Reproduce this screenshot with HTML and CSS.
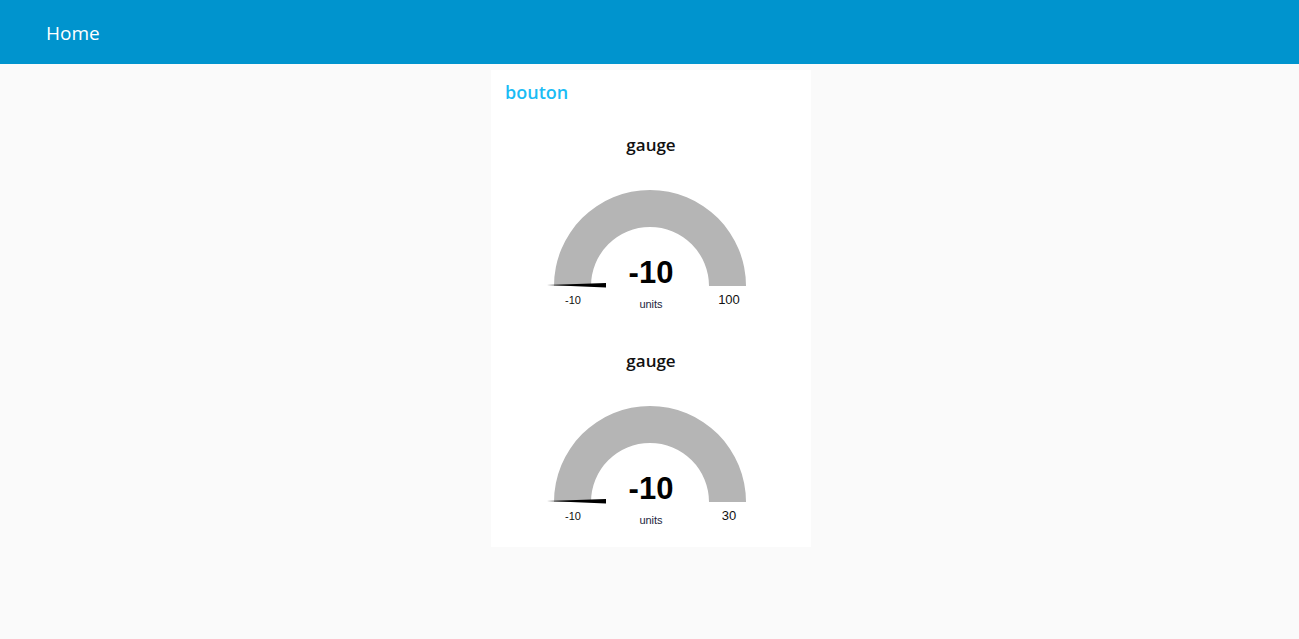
FILE: index.html
```html
<!DOCTYPE html>
<html>
<head>
<meta charset="utf-8">
<title>Node-RED Dashboard</title>
<link rel="stylesheet" href="styles.css">
</head>
<body>
<header class="toolbar">
  <span class="toolbar-title">Home</span>
</header>
<main class="content">
  <section class="card">
    <h2 class="card-title">bouton</h2>
    <div class="gauge-block">
      <div class="gauge-title">gauge</div>
      <svg class="gauge-svg" width="320" height="166" viewBox="0 0 320 166">
        <path class="gauge-arc" d="M 63 121 A 96 96 0 0 1 255 121 L 218 121 A 59 59 0 0 0 100 121 Z"/>
        <polygon class="gauge-needle" points="56,120 115,118 115,122.5"/>
        <text class="gauge-value" x="160" y="118">-10</text>
        <text class="gauge-units" x="160" y="143">units</text>
        <text class="gauge-label" x="82" y="139">-10</text>
        <text class="gauge-label gauge-max" x="238" y="139">100</text>
      </svg>
    </div>
    <div class="gauge-block">
      <div class="gauge-title">gauge</div>
      <svg class="gauge-svg" width="320" height="166" viewBox="0 0 320 166">
        <path class="gauge-arc" d="M 63 121 A 96 96 0 0 1 255 121 L 218 121 A 59 59 0 0 0 100 121 Z"/>
        <polygon class="gauge-needle" points="56,120 115,118 115,122.5"/>
        <text class="gauge-value" x="160" y="118">-10</text>
        <text class="gauge-units" x="160" y="143">units</text>
        <text class="gauge-label" x="82" y="139">-10</text>
        <text class="gauge-label gauge-max" x="238" y="139">30</text>
      </svg>
    </div>
  </section>
</main>
</body>
</html>
```
FILE: styles.css
```css
html, body {
  margin: 0;
  padding: 0;
}
body {
  background: #fafafa;
  font-family: "Open Sans", "DejaVu Sans", sans-serif;
  width: 1299px;
  height: 639px;
  overflow: hidden;
}
.toolbar {
  height: 64px;
  background: #0094ce;
  display: flex;
  align-items: center;
  padding-left: 46px;
  box-sizing: border-box;
}
.toolbar-title {
  color: #ffffff;
  font-size: 19px;
  line-height: 24px;
  margin-top: 2px;
}
.content {
  display: flex;
  justify-content: center;
  padding-top: 6px;
  padding-left: 3px;
}
.card {
  width: 320px;
  background: #ffffff;
  display: flex;
  flex-direction: column;
  gap: 10px;
}
.card-title {
  margin: 0;
  height: 45px;
  padding: 10px 0 0 14px;
  box-sizing: border-box;
  color: #1bbcf5;
  font-size: 18px;
  font-weight: 600;
  line-height: 24px;
}
.gauge-block {
  display: flex;
  flex-direction: column;
  align-items: center;
}
.gauge-title {
  height: 40px;
  line-height: 40px;
  font-size: 17px;
  font-weight: 600;
  color: #111111;
  text-align: center;
  width: 100%;
}
.gauge-svg {
  display: block;
}
.gauge-arc {
  fill: #b5b5b5;
}
.gauge-needle {
  fill: #000000;
}
.gauge-value {
  font-family: "Liberation Sans", Arial, sans-serif;
  font-weight: bold;
  font-size: 31px;
  text-anchor: middle;
  fill: #010101;
}
.gauge-units {
  font-family: "Liberation Sans", Arial, sans-serif;
  font-size: 11px;
  text-anchor: middle;
  fill: #1c2640;
}
.gauge-label {
  font-family: "Liberation Sans", Arial, sans-serif;
  font-size: 11px;
  text-anchor: middle;
  fill: #111111;
}
.gauge-max {
  font-size: 13px;
}
```
